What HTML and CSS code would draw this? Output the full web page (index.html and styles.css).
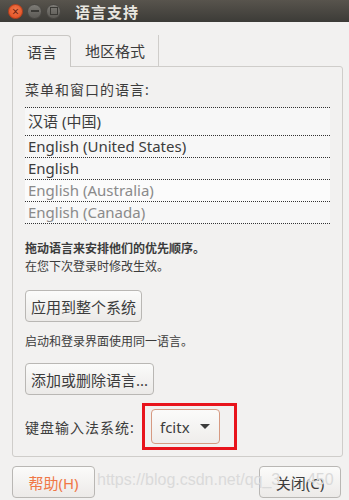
FILE: index.html
```
<!DOCTYPE html>
<html>
    <head>
        <title>语言支持</title>
        <meta charset="utf-8">
        <link rel="stylesheet" href="styles.css">
    </head>
    <body>
        <div class="titlebar">
            <div class="wbtn close">&#215;</div>
            <div class="wbtn min"><span class="dash"></span></div>
            <div class="wbtn max"><span class="sq"></span></div>
            <div class="title">语言支持</div>
        </div>

        <div class="content">
            <div class="tabs">
                <div class="tab active">语言</div>
                <div class="tab">地区格式</div>
            </div>

            <div class="pane">
                <div class="label">菜单和窗口的语言:</div>
                <div class="list">
                    <div class="row first">汉语 (中国)</div>
                    <div class="row">English (United States)</div>
                    <div class="row">English</div>
                    <div class="row dim">English (Australia)</div>
                    <div class="row dim">English (Canada)</div>
                </div>

                <div class="hint bold">拖动语言来安排他们的优先顺序。</div>
                <div class="hint">在您下次登录时修改生效。</div>

                <button class="btn apply">应用到整个系统</button>

                <div class="hint">启动和登录界面使用同一语言。</div>

                <button class="btn add">添加或删除语言...</button>

                <div class="im">
                    <span class="im-label">键盘输入法系统:</span>
                    <div class="mark">
                        <div class="combo">fcitx <span class="arrow"></span></div>
                    </div>
                </div>
            </div>

            <div class="footer">
                <button class="btn help">帮助(H)</button>
                <button class="btn closebtn">关闭(C)</button>
                <div class="watermark">https://blog.csdn.net/qq_3&nbsp;&nbsp;&nbsp;&nbsp;&nbsp;&nbsp;450</div>
            </div>
        </div>
    </body>
</html>
```

FILE: styles.css
```
body {margin: 0; width: 349px; height: 500px; overflow: hidden; background: #f2f1f0; font-family: "Noto Sans", "Noto Sans CJK SC", sans-serif; color: #3c3c3c;}

.titlebar {height: 22px; display: flex; align-items: center; background: linear-gradient(#58544d, #3c3b37); padding-left: 8px;}
.wbtn {width: 15px; height: 15px; border-radius: 50%; margin-right: 4px; display: flex; align-items: center; justify-content: center; box-sizing: border-box;}
.close {background: radial-gradient(circle at 50% 40%, #f07a4c, #e0471c); color: #6b2010; font-size: 12px; line-height: 15px; border: 1px solid #b8401c;}
.min, .max {background: linear-gradient(#7d7b76, #5c5a55); border: 1px solid #4a4844;}
.dash {width: 8px; height: 2px; background: #3a3935;}
.sq {width: 6px; height: 6px; border: 1.5px solid #3a3935;}
.title {color: #e8e6e0; font-weight: bold; font-size: 15px; margin-left: 10px; letter-spacing: 1px;}

.content {padding: 12px 6px 0 12px; position: relative;}
.tabs {display: flex; height: 32px; align-items: flex-end;}
.tab {height: 31px; box-sizing: border-box; font-size: 15px; display: flex; align-items: center; padding: 0 13px 0 14px; border-right: 1px solid #cfcdca;}
.tab.active {border: 1px solid #c9c7c4; border-bottom: none; border-radius: 4px 4px 0 0; height: 32px; padding: 0 13px 0 14px; background: #f2f1f0; position: relative; top: 1px;}

.pane {border: 1px solid #cfcdca; border-radius: 0 3px 3px 3px; height: 391px; box-sizing: border-box; padding: 12px 12px 0 12px;}
.label {font-size: 14px; height: 22px; line-height: 22px; letter-spacing: 1px;}
.list {margin-top: 6px; border-top: 1px dotted #333;}
.row {height: 21px; line-height: 21px; font-size: 15px; padding-left: 3px; background: #f7f7f7; border-bottom: 1px dotted #333;}
.row.first {height: 27px; line-height: 27px;}
.row.dim {color: #8a8a8a;}
.row:nth-child(4) {background: #fbfbfb;}

.hint {font-size: 12px; line-height: 18px;}
.hint.bold {font-weight: bold; margin-top: 16px;}

.btn {font-family: inherit; font-size: 15px; color: #3c3c3c; background: linear-gradient(#fbfbfa, #eceae8); border: 1px solid #b9b7b4; border-radius: 4px; height: 32px; padding: 0 5px; display: block;}
.apply {margin: 14px 0 11px 0;}
.add {margin-top: 12px;}

.im {display: flex; align-items: center; margin-top: 8px;}
.im-label {font-size: 14px; letter-spacing: 1px; width: 117px;}
.mark {border: 3px solid #e8141c; padding: 3px 14px 3px 6px;}
.combo {width: 69px; height: 35px; box-sizing: border-box; border: 1px solid #d69a82; border-radius: 4px; background: linear-gradient(#fbfbfa, #efedeb); display: flex; align-items: center; padding-left: 8px; font-size: 15px; gap: 10px;}
.arrow {width: 0; height: 0; border-left: 5px solid transparent; border-right: 5px solid transparent; border-top: 5px solid #3c3c3c;}

.footer {display: flex; justify-content: space-between; margin-top: 9px; padding-right: 2px;}
.help {width: 83px; color: #f07746;}
.closebtn {width: 82px;}
.watermark {position: absolute; left: 97px; top: 449px; font-family: "Liberation Sans", sans-serif; font-size: 16px; color: #dadada; pointer-events: none;}
```
